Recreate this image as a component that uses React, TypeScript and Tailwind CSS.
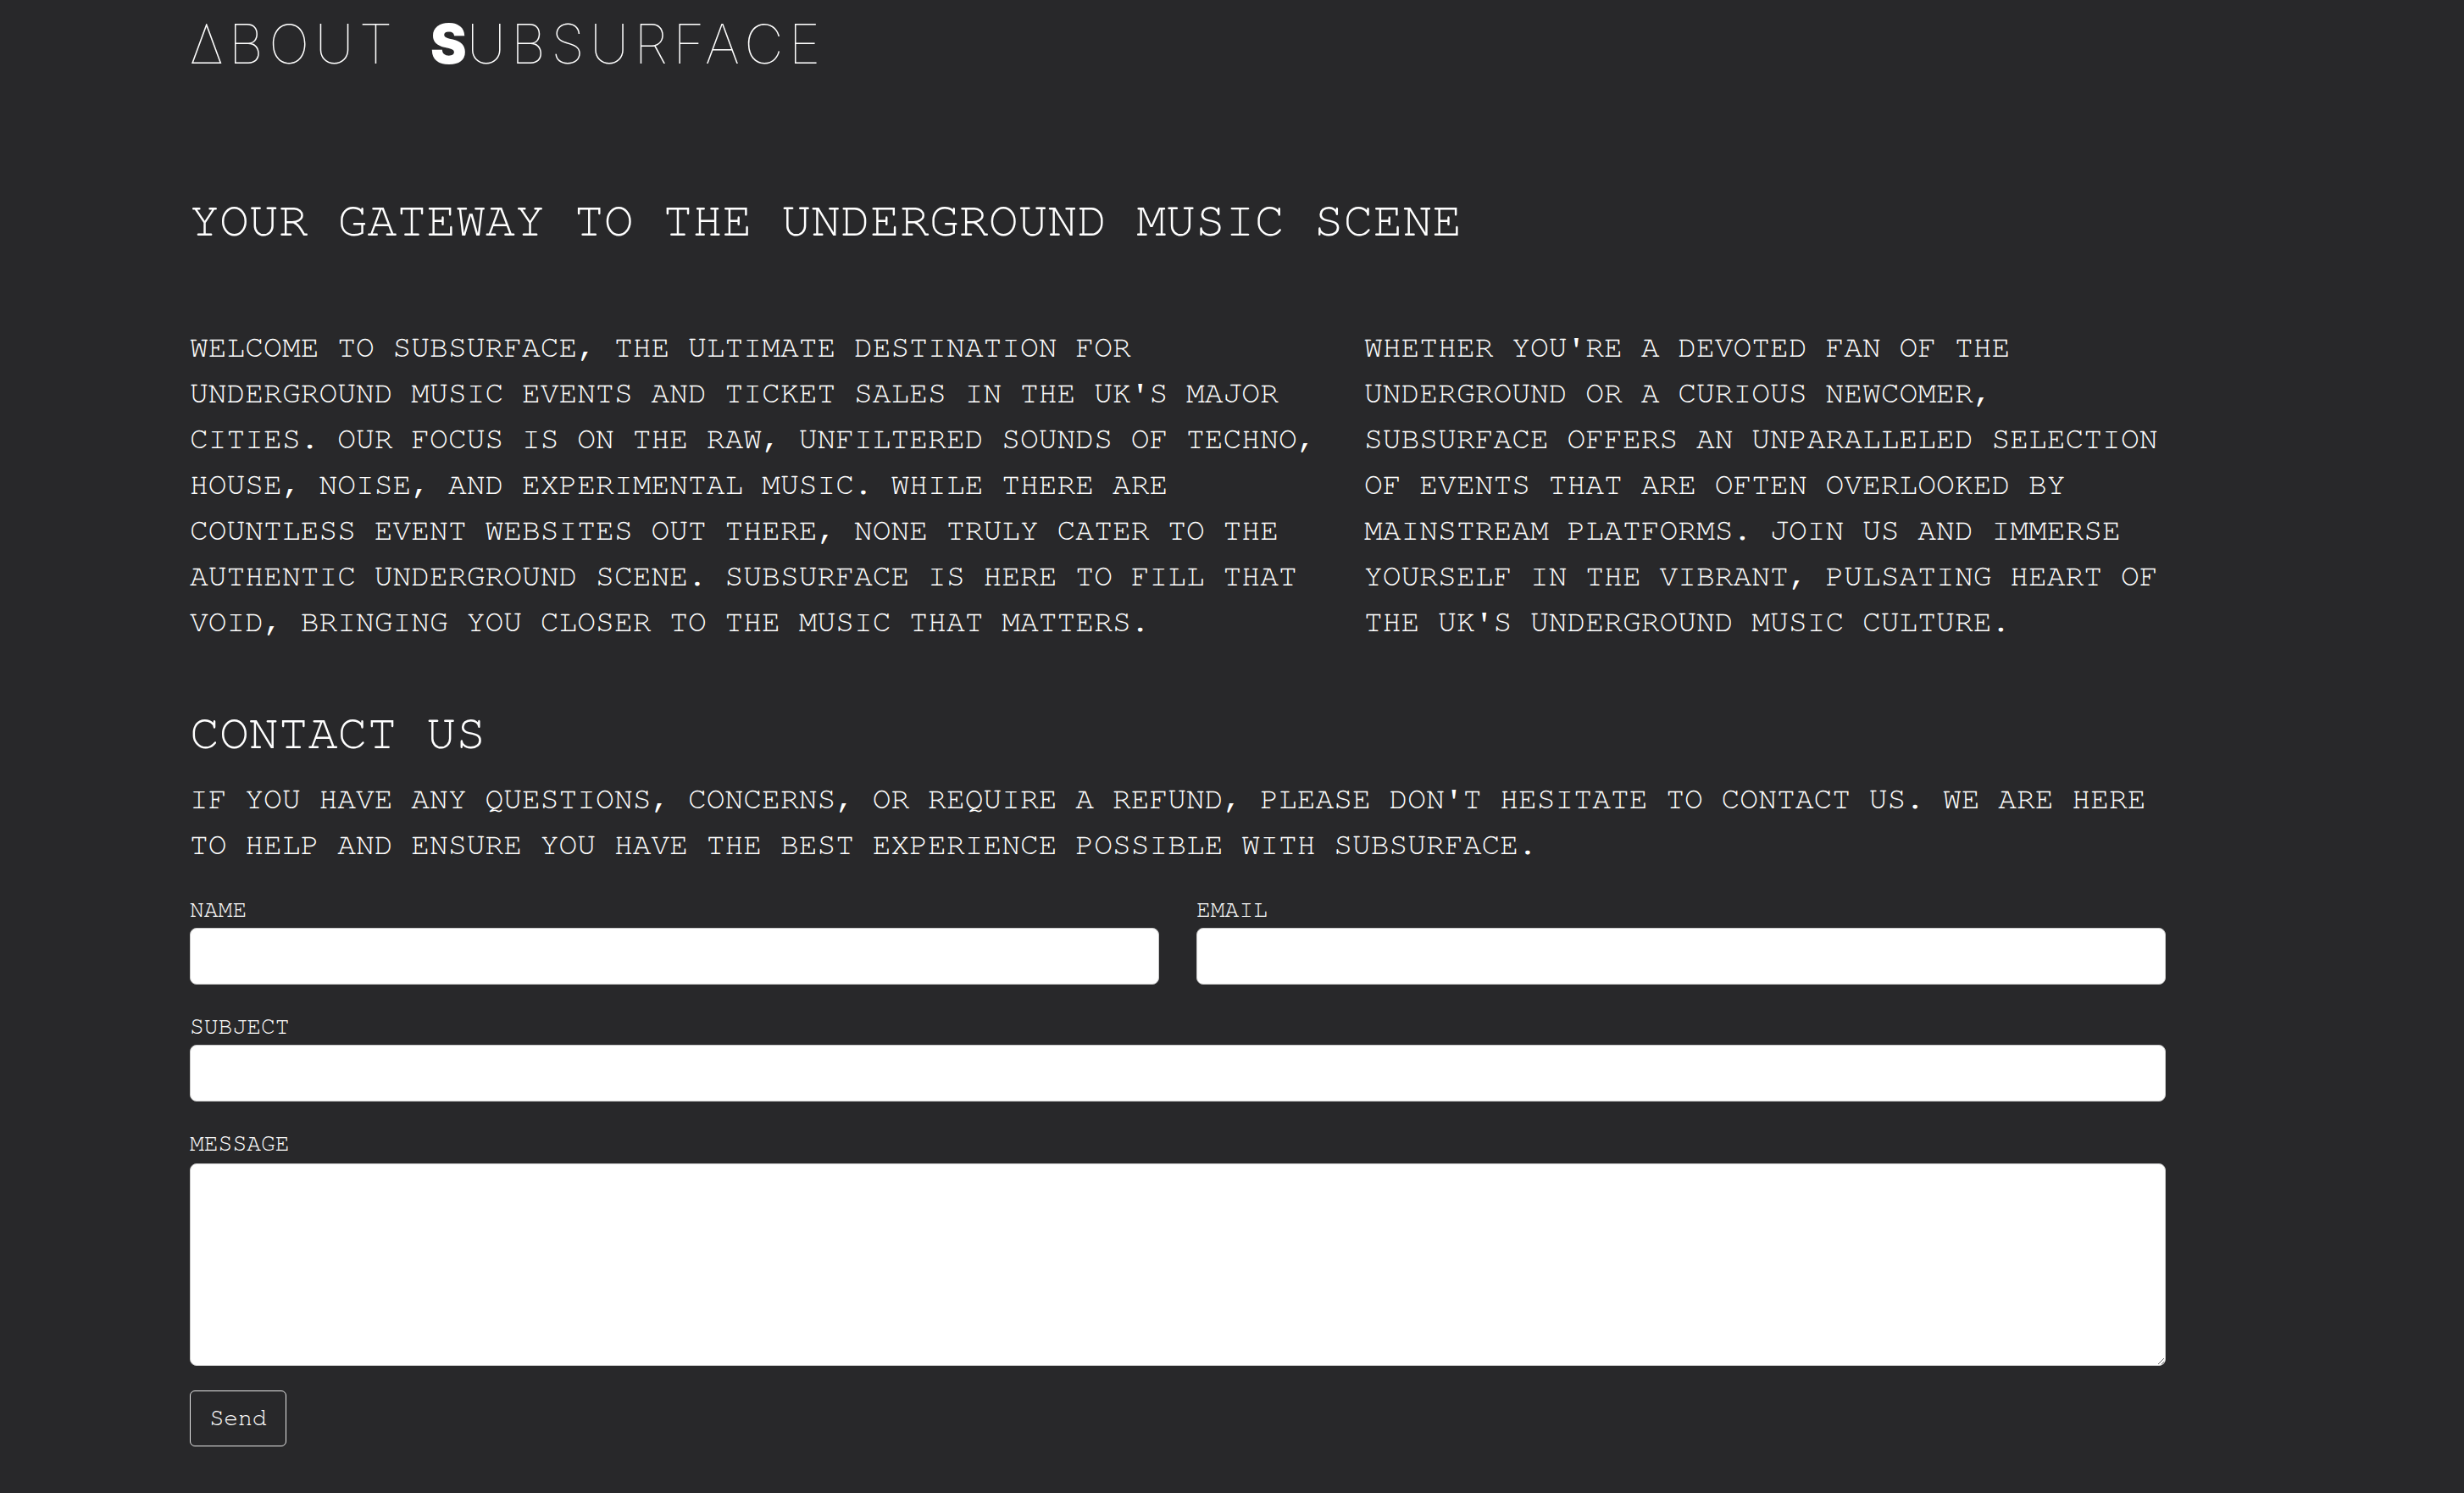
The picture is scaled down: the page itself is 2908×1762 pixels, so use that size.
import React, { useState } from 'react'

const mono = "font-['Nimbus_Mono_PS','Nimbus_Mono_L','FreeMono','Courier','Liberation_Mono',monospace]"

function Field({ label, children }: { label: string; children: React.ReactNode }) {
  return (
    <div className="flex flex-col">
      <label className="text-[28px] leading-[42px] text-white uppercase">{label}</label>
      {children}
    </div>
  )
}

export default function App() {
  const [form, setForm] = useState({ name: '', email: '', subject: '', message: '' })

  const set = (key: keyof typeof form) => (e: React.ChangeEvent<HTMLInputElement | HTMLTextAreaElement>) =>
    setForm({ ...form, [key]: e.target.value })

  const inputCls = 'h-[67px] w-full rounded-[8px] border border-[#c9c9c9] bg-white px-4 text-[28px] text-black outline-none'

  return (
    <div className={`min-h-[1762px] w-full bg-[#28282a] text-white ${mono}`}>
      <div className="ml-[224px] w-[2332px] pt-[14px] pb-[54px]">
        {/* Logo / título */}
        <h1 className="font-['Inter','Lato',sans-serif] text-[64px] leading-[76px] font-thin tracking-[0.1em] text-white">
          ΔBOUT <span className="ml-[14px] font-black tracking-normal">S</span>UBSURFACE
        </h1>

        <h2 className="mt-[136px] text-[58.2px] leading-[70px] uppercase">Your gateway to the underground music scene</h2>

        {/* Dos columnas */}
        <div className="mt-[87px] grid grid-cols-[1360px_950px] gap-x-[26px] text-[36.3px] leading-[54px] uppercase">
          <p>
            Welcome to Subsurface, the ultimate destination for underground music events and ticket sales in the UK's
            major cities. Our focus is on the raw, unfiltered sounds of techno, house, noise, and experimental music.
            While there are countless event websites out there, none truly cater to the authentic underground scene.
            Subsurface is here to fill that void, bringing you closer to the music that matters.
          </p>
          <p>
            Whether you're a devoted fan of the underground or a curious newcomer, Subsurface offers an unparalleled
            selection of events that are often overlooked by mainstream platforms. Join us and immerse yourself in the
            vibrant, pulsating heart of the UK's underground music culture.
          </p>
        </div>

        <h2 className="mt-[70px] text-[58.2px] leading-[70px] uppercase">Contact us</h2>
        <p className="mt-[15px] text-[36.3px] leading-[54px] uppercase">
          If you have any questions, concerns, or require a refund, please don't hesitate to contact us. We are here to
          help and ensure you have the best experience possible with Subsurface.
        </p>

        {/* Formulario */}
        <form className="mt-[29px] flex flex-col gap-[29px]" onSubmit={(e) => e.preventDefault()}>
          <div className="grid grid-cols-2 gap-x-[44px]">
            <Field label="Name">
              <input className={inputCls} value={form.name} onChange={set('name')} />
            </Field>
            <Field label="Email">
              <input type="email" className={inputCls} value={form.email} onChange={set('email')} />
            </Field>
          </div>
          <Field label="Subject">
            <input className={inputCls} value={form.subject} onChange={set('subject')} />
          </Field>
          <Field label="Message">
            <textarea
              className="mt-[2px] h-[239px] w-full rounded-[8px] border border-[#c9c9c9] bg-white p-4 text-[28px] text-black outline-none"
              value={form.message}
              onChange={set('message')}
            />
          </Field>
          <div>
            <button
              type="submit"
              className="h-[66px] w-[114px] rounded-[6px] border border-[#e6e6e6] text-[28px] text-white"
            >
              Send
            </button>
          </div>
        </form>
      </div>
    </div>
  )
}
